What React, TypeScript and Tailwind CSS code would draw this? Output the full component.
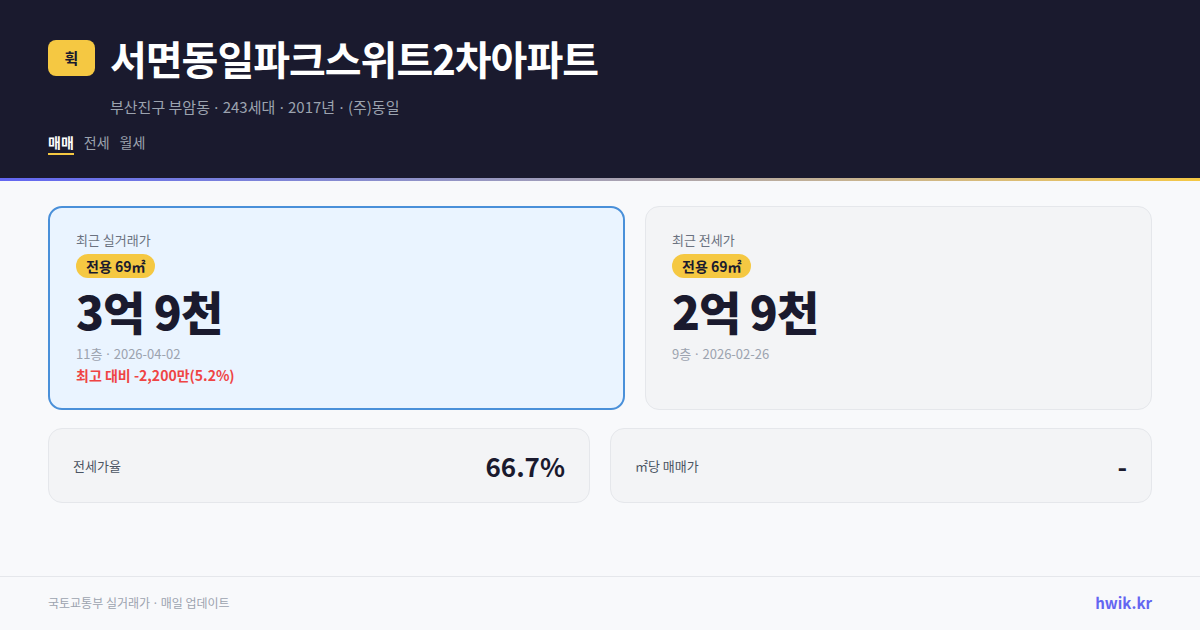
const Dot = () => <span className="font-['Noto_Sans'] px-[1px]">·</span>;

export default function App() {
  return (
    <div
      className="w-[1200px] h-[630px] bg-[#f8f9fb] flex flex-col overflow-hidden"
      style={{ fontFamily: '"Noto Sans CJK KR", sans-serif' }}
    >
      {/* header */}
      <div className="bg-[#1a1a2e] h-[178px] px-12 pt-[32px] flex flex-col">
        <div className="flex items-center gap-[15px]">
          <div className="w-[47px] h-[36px] rounded-lg bg-[#f5c842] flex items-center justify-center text-[#1a1a2e] text-[15px] font-bold">
            휙
          </div>
          <h1 className="text-[40px] leading-[52px] font-bold text-white tracking-[-1px]">서면동일파크스위트2차아파트</h1>
        </div>
        <div className="pl-[62px] mt-[12px] text-[15px] leading-[22px] text-[#9ca3af]">
          부산진구 부암동 <Dot /> 243세대 <Dot /> 2017년 <Dot /> (주)동일
        </div>
        <div className="flex gap-[10px] mt-[14px] text-[14px] leading-[20px]">
          <div className="text-white font-bold border-b-2 border-[#f5c842] pb-[1px]">매매</div>
          <div className="text-[#9ca3af]">전세</div>
          <div className="text-[#9ca3af]">월세</div>
        </div>
      </div>
      <div className="h-[3px] bg-gradient-to-r from-[#6366f1] to-[#f5c842]" />

      {/* main cards */}
      <div className="px-12 pt-[25px] flex flex-col gap-[18px]">
        <div className="grid grid-cols-[577px_1fr] gap-[20px]">
          <div className="h-[204px] rounded-[14px] border-2 border-[#4a90d9] bg-[#eaf4ff] px-[26px] pt-[23px]">
            <div className="text-[13px] leading-[18px] text-[#6b7280]">최근 실거래가</div>
            <div className="inline-block mt-[5px] rounded-full bg-[#f5c842] px-[10px] text-[14px] leading-[24px] font-bold text-[#1a1a2e]">
              전용 69㎡
            </div>
            <div className="mt-[4px] text-[46px] leading-[56px] font-extrabold text-[#1a1a2e] tracking-[-1px]">3억 9천</div>
            <div className="mt-[7px] text-[13px] leading-[18px] text-[#9ca3af]">11층 <Dot /> 2026-04-02</div>
            <div className="mt-[2px] text-[14px] leading-[20px] font-semibold text-[#ef4444]">최고 대비 -2,200만(5.2%)</div>
          </div>
          <div className="h-[204px] rounded-[14px] border border-[#e5e7eb] bg-[#f3f4f6] px-[26px] pt-[24px]">
            <div className="text-[13px] leading-[18px] text-[#6b7280]">최근 전세가</div>
            <div className="inline-block mt-[5px] rounded-full bg-[#f5c842] px-[10px] text-[14px] leading-[24px] font-bold text-[#1a1a2e]">
              전용 69㎡
            </div>
            <div className="mt-[4px] text-[46px] leading-[56px] font-extrabold text-[#1a1a2e] tracking-[-1px]">2억 9천</div>
            <div className="mt-[7px] text-[13px] leading-[18px] text-[#9ca3af]">9층 <Dot /> 2026-02-26</div>
          </div>
        </div>

        <div className="grid grid-cols-2 gap-[20px]">
          <div className="h-[75px] rounded-[14px] border border-[#e5e7eb] bg-[#f3f4f6] px-6 flex items-center justify-between">
            <div className="text-[13px] text-[#4b5563]">전세가율</div>
            <div className="text-[26px] font-bold text-[#1a1a2e]">66.7%</div>
          </div>
          <div className="h-[75px] rounded-[14px] border border-[#e5e7eb] bg-[#f3f4f6] px-6 flex items-center justify-between">
            <div className="text-[13px] text-[#4b5563]">㎡당 매매가</div>
            <div className="text-[26px] font-bold text-[#1a1a2e]">-</div>
          </div>
        </div>
      </div>

      {/* footer */}
      <div className="mt-auto h-[54px] border-t border-[#e5e7eb] px-12 flex items-center justify-between">
        <div className="text-[12px] text-[#9ca3af]">국토교통부 실거래가 <Dot /> 매일 업데이트</div>
        <div className="text-[15px] font-bold text-[#6366f1]">hwik.kr</div>
      </div>
    </div>
  );
}
